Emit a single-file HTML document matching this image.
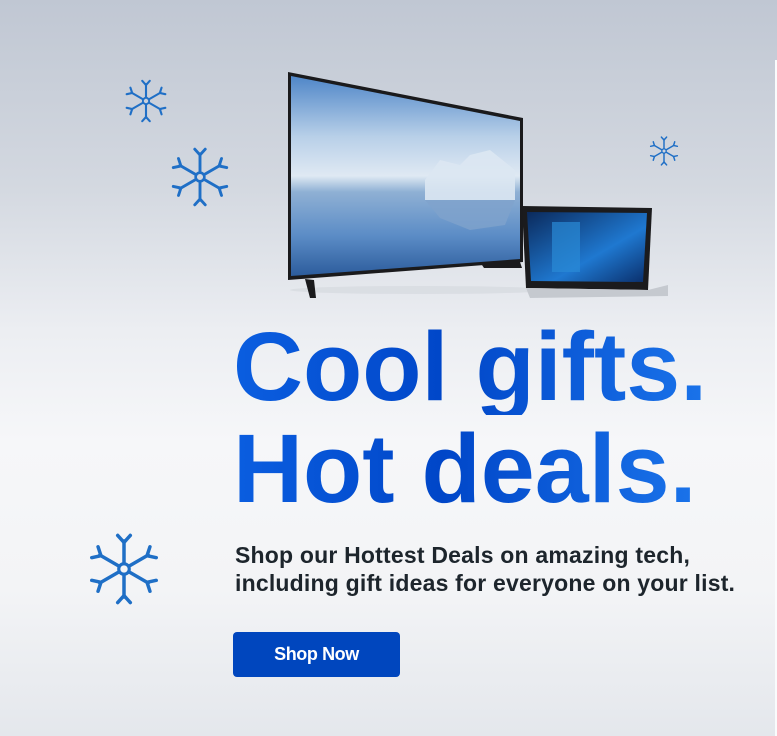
<!DOCTYPE html>
<html><head><meta charset="utf-8"><style>
html,body{margin:0;padding:0}
body{width:777px;height:736px;overflow:hidden;position:relative;font-family:"Liberation Sans",Arial,sans-serif;
background:linear-gradient(180deg,#c0c7d3 0%,#d3d8e0 25%,#eceef2 45%,#f6f7f9 60%,#f3f4f6 80%,#e4e7ec 100%)}
.abs{position:absolute}
.h{left:233px;font-weight:bold;font-size:97px;letter-spacing:0px;line-height:1;color:#0a52d8;
background:linear-gradient(90deg,#0b5ee0,#0046c8 45%,#1a73ea);-webkit-background-clip:text;background-clip:text;-webkit-text-fill-color:transparent;white-space:nowrap}
.p{left:235px;font-weight:bold;font-size:23px;color:#1d252c;letter-spacing:0.2px;line-height:28px;white-space:nowrap}
.btn{left:233px;top:632px;width:167px;height:45px;background:#0046be;border-radius:4px;color:#fff;font-weight:bold;font-size:18px;text-align:center;line-height:45px;letter-spacing:-0.4px}
</style></head><body>
<div class="abs" style="right:0;top:60px;width:2px;height:676px;background:#fafbfc"></div>
<svg width="0" height="0" style="position:absolute">
<defs>
<g id="arm" stroke-linecap="round" fill="none">
<line x1="0" y1="-9" x2="0" y2="-40" stroke-width="5"/>
<path d="M-9,-48 L0,-38 L9,-48" stroke-width="5"/>
<circle cx="0" cy="-54" r="2.8" stroke="none"/>
</g>
<g id="sf">
<circle cx="0" cy="0" r="7.5" fill="none" stroke-width="4.5"/>
<use href="#arm"/><use href="#arm" transform="rotate(60)"/><use href="#arm" transform="rotate(120)"/>
<use href="#arm" transform="rotate(180)"/><use href="#arm" transform="rotate(240)"/><use href="#arm" transform="rotate(300)"/>
</g>
</defs>
</svg>
<svg class="abs" style="left:0;top:0" width="777" height="736">
<g fill="#1f6fc6" stroke="#1f6fc6">
<use href="#sf" transform="translate(146,101) scale(0.42)"/>
<use href="#sf" transform="translate(200,177) scale(0.58)"/>
<use href="#sf" transform="translate(664,151) scale(0.29)"/>
<use href="#sf" transform="translate(124,569) scale(0.7)"/>
</g>
<defs>
<linearGradient id="sky" x1="0" y1="0" x2="0" y2="1">
<stop offset="0" stop-color="#4f86c8"/><stop offset="0.3" stop-color="#b7cfe8"/><stop offset="0.5" stop-color="#dfe9f3"/>
<stop offset="0.58" stop-color="#8fb0d4"/><stop offset="0.8" stop-color="#5b8cc6"/><stop offset="1" stop-color="#2c5c9c"/></linearGradient>
<linearGradient id="win" x1="0" y1="0" x2="1" y2="1"><stop offset="0" stop-color="#0b2a5c"/><stop offset="0.6" stop-color="#1f78d0"/><stop offset="1" stop-color="#0a2e6a"/></linearGradient>
</defs>
<ellipse cx="420" cy="290" rx="130" ry="4" fill="#cfd3d9" opacity="0.5"/>
<polygon points="288,72 523,118 523,262 288,280" fill="#1a1a1c"/>
<polygon points="291,76 520,121 520,259 291,276" fill="url(#sky)"/>
<polygon points="425,180 440,160 460,165 470,155 490,150 515,170 515,200 425,200" fill="#dbe7f2" opacity="0.9"/>
<polygon points="425,200 515,200 505,225 470,230 440,218" fill="#7fa3cc" opacity="0.8"/>
<path d="M305,279 L310,298 L316,298 L314,280 Z M480,262 L520,262 L522,268 L484,268 Z" fill="#1a1a1c"/>
<polygon points="522,206 652,208 648,290 526,288" fill="#1b1b1d"/>
<polygon points="527,212 647,213 643,282 531,281" fill="url(#win)"/>
<rect x="552" y="222" width="28" height="50" fill="#2a8ad6" opacity="0.7"/>
<polygon points="526,288 648,290 668,285 668,296 530,298" fill="#c5c9cf"/>
</svg>
<div class="abs h" style="top:318px">Cool gifts.</div>
<div class="abs h" style="top:420px">Hot deals.</div>
<div class="abs p" style="top:541px">Shop our Hottest Deals on amazing tech,<br>including gift ideas for everyone on your list.</div>
<div class="abs btn">Shop Now</div>
</body></html>
